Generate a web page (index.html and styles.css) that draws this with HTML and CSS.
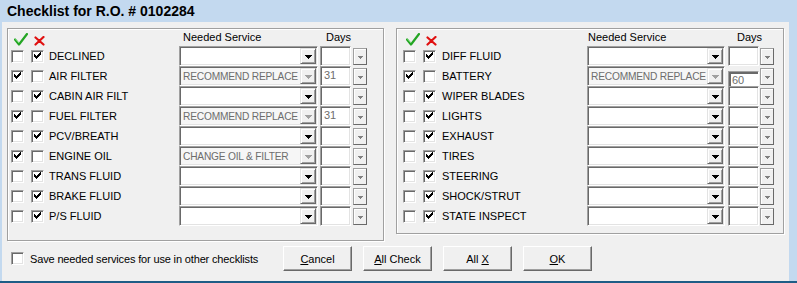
FILE: index.html
```html
<!DOCTYPE html>
<html>
<head>
<meta charset="utf-8">
<link rel="stylesheet" href="styles.css">
</head>
<body>
<div class="window">
  <div class="titlebar">Checklist for R.O. # 0102284</div>
  <div class="client">
    <div class="groups">
      <div class="group group-left">
        <div class="head">
          <span class="ico-ok"><svg width="14" height="13" viewBox="0 0 14 13"><path d="M1 6.5 L5 11.5 L13 1" fill="none" stroke="#23a523" stroke-width="2.2" stroke-linecap="round" stroke-linejoin="round"/><path d="M1.5 6 L5 10" fill="none" stroke="#7ee07e" stroke-width="1"/></svg></span>
          <span class="ico-x"><svg width="11" height="10" viewBox="0 0 11 10"><path d="M1.5 1.5 L9.5 8.5 M9.5 1 L1.5 8.5" fill="none" stroke="#e01010" stroke-width="2.2" stroke-linecap="round"/></svg></span>
          <span class="h-service">Needed Service</span>
          <span class="h-days">Days</span>
        </div>
        <div class="row">
          <span class="cb"></span><span class="cb"><svg class="chk" viewBox="0 0 9 9"><path d="M1 2h1v3h-1zM2 3h1v3h-1zM3 4h1v3h-1zM4 3h1v3h-1zM5 2h1v3h-1zM6 1h1v3h-1zM7 0h1v3h-1z"/></svg></span>
          <span class="lbl">DECLINED</span>
          <span class="combo"><span class="ctext"></span><span class="dd"><svg class="arr" viewBox="0 0 7 4"><path d="M0 0h7v1h-1v1h-1v1h-1v1h-1v-1h-1v-1h-1v-1h-1z"/></svg></span></span>
          <span class="days"></span><span class="dbtn"><svg class="sarr" viewBox="0 0 5 3"><path d="M0 0h5v1h-1v1h-1v1h-1v-1h-1v-1h-1z"/></svg></span>
        </div>
        <div class="row">
          <span class="cb"><svg class="chk" viewBox="0 0 9 9"><path d="M1 2h1v3h-1zM2 3h1v3h-1zM3 4h1v3h-1zM4 3h1v3h-1zM5 2h1v3h-1zM6 1h1v3h-1zM7 0h1v3h-1z"/></svg></span><span class="cb"></span>
          <span class="lbl">AIR FILTER</span>
          <span class="combo dis"><span class="ctext">RECOMMEND REPLACE</span><span class="dd"><svg class="arr" viewBox="0 0 7 4"><path d="M0 0h7v1h-1v1h-1v1h-1v1h-1v-1h-1v-1h-1v-1h-1z"/></svg></span></span>
          <span class="days">31</span><span class="dbtn"><svg class="sarr" viewBox="0 0 5 3"><path d="M0 0h5v1h-1v1h-1v1h-1v-1h-1v-1h-1z"/></svg></span>
        </div>
        <div class="row">
          <span class="cb"></span><span class="cb"><svg class="chk" viewBox="0 0 9 9"><path d="M1 2h1v3h-1zM2 3h1v3h-1zM3 4h1v3h-1zM4 3h1v3h-1zM5 2h1v3h-1zM6 1h1v3h-1zM7 0h1v3h-1z"/></svg></span>
          <span class="lbl">CABIN AIR FILT</span>
          <span class="combo"><span class="ctext"></span><span class="dd"><svg class="arr" viewBox="0 0 7 4"><path d="M0 0h7v1h-1v1h-1v1h-1v1h-1v-1h-1v-1h-1v-1h-1z"/></svg></span></span>
          <span class="days"></span><span class="dbtn"><svg class="sarr" viewBox="0 0 5 3"><path d="M0 0h5v1h-1v1h-1v1h-1v-1h-1v-1h-1z"/></svg></span>
        </div>
        <div class="row">
          <span class="cb"><svg class="chk" viewBox="0 0 9 9"><path d="M1 2h1v3h-1zM2 3h1v3h-1zM3 4h1v3h-1zM4 3h1v3h-1zM5 2h1v3h-1zM6 1h1v3h-1zM7 0h1v3h-1z"/></svg></span><span class="cb"></span>
          <span class="lbl">FUEL FILTER</span>
          <span class="combo dis"><span class="ctext">RECOMMEND REPLACE</span><span class="dd"><svg class="arr" viewBox="0 0 7 4"><path d="M0 0h7v1h-1v1h-1v1h-1v1h-1v-1h-1v-1h-1v-1h-1z"/></svg></span></span>
          <span class="days">31</span><span class="dbtn"><svg class="sarr" viewBox="0 0 5 3"><path d="M0 0h5v1h-1v1h-1v1h-1v-1h-1v-1h-1z"/></svg></span>
        </div>
        <div class="row">
          <span class="cb"></span><span class="cb"><svg class="chk" viewBox="0 0 9 9"><path d="M1 2h1v3h-1zM2 3h1v3h-1zM3 4h1v3h-1zM4 3h1v3h-1zM5 2h1v3h-1zM6 1h1v3h-1zM7 0h1v3h-1z"/></svg></span>
          <span class="lbl">PCV/BREATH</span>
          <span class="combo"><span class="ctext"></span><span class="dd"><svg class="arr" viewBox="0 0 7 4"><path d="M0 0h7v1h-1v1h-1v1h-1v1h-1v-1h-1v-1h-1v-1h-1z"/></svg></span></span>
          <span class="days"></span><span class="dbtn"><svg class="sarr" viewBox="0 0 5 3"><path d="M0 0h5v1h-1v1h-1v1h-1v-1h-1v-1h-1z"/></svg></span>
        </div>
        <div class="row">
          <span class="cb"><svg class="chk" viewBox="0 0 9 9"><path d="M1 2h1v3h-1zM2 3h1v3h-1zM3 4h1v3h-1zM4 3h1v3h-1zM5 2h1v3h-1zM6 1h1v3h-1zM7 0h1v3h-1z"/></svg></span><span class="cb"></span>
          <span class="lbl">ENGINE OIL</span>
          <span class="combo dis"><span class="ctext">CHANGE OIL &amp; FILTER</span><span class="dd"><svg class="arr" viewBox="0 0 7 4"><path d="M0 0h7v1h-1v1h-1v1h-1v1h-1v-1h-1v-1h-1v-1h-1z"/></svg></span></span>
          <span class="days"></span><span class="dbtn"><svg class="sarr" viewBox="0 0 5 3"><path d="M0 0h5v1h-1v1h-1v1h-1v-1h-1v-1h-1z"/></svg></span>
        </div>
        <div class="row">
          <span class="cb"></span><span class="cb"><svg class="chk" viewBox="0 0 9 9"><path d="M1 2h1v3h-1zM2 3h1v3h-1zM3 4h1v3h-1zM4 3h1v3h-1zM5 2h1v3h-1zM6 1h1v3h-1zM7 0h1v3h-1z"/></svg></span>
          <span class="lbl">TRANS FLUID</span>
          <span class="combo"><span class="ctext"></span><span class="dd"><svg class="arr" viewBox="0 0 7 4"><path d="M0 0h7v1h-1v1h-1v1h-1v1h-1v-1h-1v-1h-1v-1h-1z"/></svg></span></span>
          <span class="days"></span><span class="dbtn"><svg class="sarr" viewBox="0 0 5 3"><path d="M0 0h5v1h-1v1h-1v1h-1v-1h-1v-1h-1z"/></svg></span>
        </div>
        <div class="row">
          <span class="cb"></span><span class="cb"><svg class="chk" viewBox="0 0 9 9"><path d="M1 2h1v3h-1zM2 3h1v3h-1zM3 4h1v3h-1zM4 3h1v3h-1zM5 2h1v3h-1zM6 1h1v3h-1zM7 0h1v3h-1z"/></svg></span>
          <span class="lbl">BRAKE FLUID</span>
          <span class="combo"><span class="ctext"></span><span class="dd"><svg class="arr" viewBox="0 0 7 4"><path d="M0 0h7v1h-1v1h-1v1h-1v1h-1v-1h-1v-1h-1v-1h-1z"/></svg></span></span>
          <span class="days"></span><span class="dbtn"><svg class="sarr" viewBox="0 0 5 3"><path d="M0 0h5v1h-1v1h-1v1h-1v-1h-1v-1h-1z"/></svg></span>
        </div>
        <div class="row">
          <span class="cb"></span><span class="cb"><svg class="chk" viewBox="0 0 9 9"><path d="M1 2h1v3h-1zM2 3h1v3h-1zM3 4h1v3h-1zM4 3h1v3h-1zM5 2h1v3h-1zM6 1h1v3h-1zM7 0h1v3h-1z"/></svg></span>
          <span class="lbl">P/S FLUID</span>
          <span class="combo"><span class="ctext"></span><span class="dd"><svg class="arr" viewBox="0 0 7 4"><path d="M0 0h7v1h-1v1h-1v1h-1v1h-1v-1h-1v-1h-1v-1h-1z"/></svg></span></span>
          <span class="days"></span><span class="dbtn"><svg class="sarr" viewBox="0 0 5 3"><path d="M0 0h5v1h-1v1h-1v1h-1v-1h-1v-1h-1z"/></svg></span>
        </div>
      </div>

      <div class="group group-right">
        <div class="head">
          <span class="ico-ok"><svg width="14" height="13" viewBox="0 0 14 13"><path d="M1 6.5 L5 11.5 L13 1" fill="none" stroke="#23a523" stroke-width="2.2" stroke-linecap="round" stroke-linejoin="round"/><path d="M1.5 6 L5 10" fill="none" stroke="#7ee07e" stroke-width="1"/></svg></span>
          <span class="ico-x"><svg width="11" height="10" viewBox="0 0 11 10"><path d="M1.5 1.5 L9.5 8.5 M9.5 1 L1.5 8.5" fill="none" stroke="#e01010" stroke-width="2.2" stroke-linecap="round"/></svg></span>
          <span class="h-service">Needed Service</span>
          <span class="h-days">Days</span>
        </div>
        <div class="row">
          <span class="cb"></span><span class="cb"><svg class="chk" viewBox="0 0 9 9"><path d="M1 2h1v3h-1zM2 3h1v3h-1zM3 4h1v3h-1zM4 3h1v3h-1zM5 2h1v3h-1zM6 1h1v3h-1zM7 0h1v3h-1z"/></svg></span>
          <span class="lbl">DIFF FLUID</span>
          <span class="combo"><span class="ctext"></span><span class="dd"><svg class="arr" viewBox="0 0 7 4"><path d="M0 0h7v1h-1v1h-1v1h-1v1h-1v-1h-1v-1h-1v-1h-1z"/></svg></span></span>
          <span class="days"></span><span class="dbtn"><svg class="sarr" viewBox="0 0 5 3"><path d="M0 0h5v1h-1v1h-1v1h-1v-1h-1v-1h-1z"/></svg></span>
        </div>
        <div class="row">
          <span class="cb"><svg class="chk" viewBox="0 0 9 9"><path d="M1 2h1v3h-1zM2 3h1v3h-1zM3 4h1v3h-1zM4 3h1v3h-1zM5 2h1v3h-1zM6 1h1v3h-1zM7 0h1v3h-1z"/></svg></span><span class="cb"></span>
          <span class="lbl">BATTERY</span>
          <span class="combo dis"><span class="ctext">RECOMMEND REPLACE</span><span class="dd"><svg class="arr" viewBox="0 0 7 4"><path d="M0 0h7v1h-1v1h-1v1h-1v1h-1v-1h-1v-1h-1v-1h-1z"/></svg></span></span>
          <span class="days days-low">60</span><span class="dbtn"><svg class="sarr" viewBox="0 0 5 3"><path d="M0 0h5v1h-1v1h-1v1h-1v-1h-1v-1h-1z"/></svg></span>
        </div>
        <div class="row">
          <span class="cb"></span><span class="cb"><svg class="chk" viewBox="0 0 9 9"><path d="M1 2h1v3h-1zM2 3h1v3h-1zM3 4h1v3h-1zM4 3h1v3h-1zM5 2h1v3h-1zM6 1h1v3h-1zM7 0h1v3h-1z"/></svg></span>
          <span class="lbl">WIPER BLADES</span>
          <span class="combo"><span class="ctext"></span><span class="dd"><svg class="arr" viewBox="0 0 7 4"><path d="M0 0h7v1h-1v1h-1v1h-1v1h-1v-1h-1v-1h-1v-1h-1z"/></svg></span></span>
          <span class="days"></span><span class="dbtn"><svg class="sarr" viewBox="0 0 5 3"><path d="M0 0h5v1h-1v1h-1v1h-1v-1h-1v-1h-1z"/></svg></span>
        </div>
        <div class="row">
          <span class="cb"></span><span class="cb"><svg class="chk" viewBox="0 0 9 9"><path d="M1 2h1v3h-1zM2 3h1v3h-1zM3 4h1v3h-1zM4 3h1v3h-1zM5 2h1v3h-1zM6 1h1v3h-1zM7 0h1v3h-1z"/></svg></span>
          <span class="lbl">LIGHTS</span>
          <span class="combo"><span class="ctext"></span><span class="dd"><svg class="arr" viewBox="0 0 7 4"><path d="M0 0h7v1h-1v1h-1v1h-1v1h-1v-1h-1v-1h-1v-1h-1z"/></svg></span></span>
          <span class="days"></span><span class="dbtn"><svg class="sarr" viewBox="0 0 5 3"><path d="M0 0h5v1h-1v1h-1v1h-1v-1h-1v-1h-1z"/></svg></span>
        </div>
        <div class="row">
          <span class="cb"></span><span class="cb"><svg class="chk" viewBox="0 0 9 9"><path d="M1 2h1v3h-1zM2 3h1v3h-1zM3 4h1v3h-1zM4 3h1v3h-1zM5 2h1v3h-1zM6 1h1v3h-1zM7 0h1v3h-1z"/></svg></span>
          <span class="lbl">EXHAUST</span>
          <span class="combo"><span class="ctext"></span><span class="dd"><svg class="arr" viewBox="0 0 7 4"><path d="M0 0h7v1h-1v1h-1v1h-1v1h-1v-1h-1v-1h-1v-1h-1z"/></svg></span></span>
          <span class="days"></span><span class="dbtn"><svg class="sarr" viewBox="0 0 5 3"><path d="M0 0h5v1h-1v1h-1v1h-1v-1h-1v-1h-1z"/></svg></span>
        </div>
        <div class="row">
          <span class="cb"></span><span class="cb"><svg class="chk" viewBox="0 0 9 9"><path d="M1 2h1v3h-1zM2 3h1v3h-1zM3 4h1v3h-1zM4 3h1v3h-1zM5 2h1v3h-1zM6 1h1v3h-1zM7 0h1v3h-1z"/></svg></span>
          <span class="lbl">TIRES</span>
          <span class="combo"><span class="ctext"></span><span class="dd"><svg class="arr" viewBox="0 0 7 4"><path d="M0 0h7v1h-1v1h-1v1h-1v1h-1v-1h-1v-1h-1v-1h-1z"/></svg></span></span>
          <span class="days"></span><span class="dbtn"><svg class="sarr" viewBox="0 0 5 3"><path d="M0 0h5v1h-1v1h-1v1h-1v-1h-1v-1h-1z"/></svg></span>
        </div>
        <div class="row">
          <span class="cb"></span><span class="cb"><svg class="chk" viewBox="0 0 9 9"><path d="M1 2h1v3h-1zM2 3h1v3h-1zM3 4h1v3h-1zM4 3h1v3h-1zM5 2h1v3h-1zM6 1h1v3h-1zM7 0h1v3h-1z"/></svg></span>
          <span class="lbl">STEERING</span>
          <span class="combo"><span class="ctext"></span><span class="dd"><svg class="arr" viewBox="0 0 7 4"><path d="M0 0h7v1h-1v1h-1v1h-1v1h-1v-1h-1v-1h-1v-1h-1z"/></svg></span></span>
          <span class="days"></span><span class="dbtn"><svg class="sarr" viewBox="0 0 5 3"><path d="M0 0h5v1h-1v1h-1v1h-1v-1h-1v-1h-1z"/></svg></span>
        </div>
        <div class="row">
          <span class="cb"></span><span class="cb"><svg class="chk" viewBox="0 0 9 9"><path d="M1 2h1v3h-1zM2 3h1v3h-1zM3 4h1v3h-1zM4 3h1v3h-1zM5 2h1v3h-1zM6 1h1v3h-1zM7 0h1v3h-1z"/></svg></span>
          <span class="lbl">SHOCK/STRUT</span>
          <span class="combo"><span class="ctext"></span><span class="dd"><svg class="arr" viewBox="0 0 7 4"><path d="M0 0h7v1h-1v1h-1v1h-1v1h-1v-1h-1v-1h-1v-1h-1z"/></svg></span></span>
          <span class="days"></span><span class="dbtn"><svg class="sarr" viewBox="0 0 5 3"><path d="M0 0h5v1h-1v1h-1v1h-1v-1h-1v-1h-1z"/></svg></span>
        </div>
        <div class="row">
          <span class="cb"></span><span class="cb"><svg class="chk" viewBox="0 0 9 9"><path d="M1 2h1v3h-1zM2 3h1v3h-1zM3 4h1v3h-1zM4 3h1v3h-1zM5 2h1v3h-1zM6 1h1v3h-1zM7 0h1v3h-1z"/></svg></span>
          <span class="lbl">STATE INSPECT</span>
          <span class="combo"><span class="ctext"></span><span class="dd"><svg class="arr" viewBox="0 0 7 4"><path d="M0 0h7v1h-1v1h-1v1h-1v1h-1v-1h-1v-1h-1v-1h-1z"/></svg></span></span>
          <span class="days"></span><span class="dbtn"><svg class="sarr" viewBox="0 0 5 3"><path d="M0 0h5v1h-1v1h-1v1h-1v-1h-1v-1h-1z"/></svg></span>
        </div>
      </div>
    </div>

    <div class="footer">
      <span class="cb"></span>
      <span class="save-lbl">Save needed services for use in other checklists</span>
      <div class="buttons">
        <span class="btn"><u>C</u>ancel</span>
        <span class="btn"><u>A</u>ll Check</span>
        <span class="btn">All <u>X</u></span>
        <span class="btn"><u>O</u>K</span>
      </div>
    </div>
  </div>
</div>
</body>
</html>
```

FILE: styles.css
```css
html, body {
  margin: 0;
  padding: 0;
  background: #f0f0f0;
}

body {
  font-family: "Liberation Sans", Arial, sans-serif;
  font-size: 11px;
  color: #000;
}

.window {
  width: 797px;
  height: 283px;
  box-sizing: border-box;
  background: #c3d9ef;
  display: flex;
  flex-direction: column;
  border-bottom: 2px solid #1e5d86;
  overflow: hidden;
}

.titlebar {
  height: 22px;
  line-height: 22px;
  padding-left: 7px;
  font-weight: bold;
  font-size: 14px;
  color: #000;
  flex: none;
}

.client {
  flex: 1;
  background: #f0f0f0;
  margin: 0 8px 0 2px;
  display: flex;
  flex-direction: column;
}

.groups {
  display: flex;
  align-items: flex-start;
  margin-top: 6px;
  height: 213px;
}

.group {
  box-sizing: border-box;
  border: 1px solid #a0a0a0;
  box-shadow: inset 1px 1px #fff, 1px 1px #fff;
  display: flex;
  flex-direction: column;
}

.group-left {
  margin-left: 5px;
  width: 377px;
  height: 213px;
  padding-left: 3px;
}

.group-right {
  margin-left: 12px;
  width: 388px;
  height: 206px;
  padding-left: 6px;
}

.head {
  height: 17px;
  display: flex;
  align-items: flex-start;
  flex: none;
}

.ico-ok {
  width: 14px;
  height: 13px;
  margin-top: 4px;
  margin-left: 3px;
}

.ico-x {
  width: 11px;
  height: 10px;
  margin-top: 7px;
  margin-left: 6px;
}

.ico-ok svg, .ico-x svg {
  display: block;
}

.h-service, .h-days {
  margin-top: 2px;
  line-height: 13px;
  white-space: nowrap;
}

.group-left .h-service {
  margin-left: 138px;
  width: 143px;
}

.group-right .h-service {
  margin-left: 151px;
  width: 149px;
}

.row {
  height: 20px;
  display: flex;
  align-items: center;
  flex: none;
}

.cb {
  width: 13px;
  height: 13px;
  box-sizing: border-box;
  background: #fff;
  border: 1px solid;
  border-color: #a0a0a0 #fff #fff #a0a0a0;
  box-shadow: inset 1px 1px #696969, inset -1px -1px #e3e3e3;
  flex: none;
  padding: 1px;
}

.cb + .cb {
  margin-left: 7px;
}

.chk {
  display: block;
  width: 9px;
  height: 9px;
  fill: #000;
  shape-rendering: crispEdges;
}

.lbl {
  flex: none;
  white-space: nowrap;
}

.group-left .lbl {
  margin-left: 5px;
  width: 130px;
}

.group-right .lbl {
  margin-left: 6px;
  width: 145px;
}

.combo {
  flex: none;
  height: 20px;
  box-sizing: border-box;
  border: 1px solid;
  border-color: #a0a0a0 #fff #fff #a0a0a0;
  box-shadow: inset 1px 1px #696969, inset -1px -1px #e3e3e3;
  background: #fff;
  display: flex;
  align-items: center;
  padding: 1px 1px 1px 2px;
}

.group-left .combo {
  width: 139px;
}

.group-right .combo {
  width: 138px;
}

.ctext {
  flex: 1;
  min-width: 0;
  overflow: hidden;
  white-space: nowrap;
  padding-left: 1px;
  font-size: 10.2px;
  letter-spacing: -0.2px;
}

.combo.dis {
  background: #f6f6f6;
}

.combo.dis .ctext {
  color: #6d6d6d;
}

.dd {
  flex: none;
  width: 16px;
  height: 16px;
  box-sizing: border-box;
  background: #f0f0f0;
  border: 1px solid;
  border-color: #e3e3e3 #696969 #696969 #e3e3e3;
  box-shadow: inset 1px 1px #fff, inset -1px -1px #a0a0a0;
  display: flex;
  align-items: center;
  justify-content: center;
}

.arr {
  width: 7px;
  height: 4px;
  fill: #000;
  shape-rendering: crispEdges;
  display: block;
  margin-top: 1px;
}

.combo.dis .arr {
  fill: #a0a0a0;
}

.days {
  flex: none;
  width: 31px;
  height: 20px;
  box-sizing: border-box;
  border: 1px solid;
  border-color: #a0a0a0 #fff #fff #a0a0a0;
  box-shadow: inset 1px 1px #696969, inset -1px -1px #e3e3e3;
  background: #fff;
  color: #6d6d6d;
  padding-left: 3px;
  line-height: 17px;
}

.group-left .days {
  margin-left: 2px;
}

.group-right .days {
  margin-left: 3px;
}

.days-low {
  margin-top: 6px;
  height: 17px;
  line-height: 17px;
  box-shadow: inset 2px 2px #696969;
}

.dbtn {
  flex: none;
  width: 14px;
  height: 17px;
  box-sizing: border-box;
  margin-left: 2px;
  background: #f0f0f0;
  border: 1px solid;
  border-color: #a0a0a0 #696969 #696969 #a0a0a0;
  box-shadow: inset 1px 1px #fff;
  display: flex;
  align-items: center;
  justify-content: center;
}

.group-right .dbtn {
  margin-left: 1px;
}

.sarr {
  width: 5px;
  height: 3px;
  fill: #808080;
  shape-rendering: crispEdges;
  display: block;
  margin-top: 2px;
}

.footer {
  display: flex;
  align-items: center;
  margin-top: 5px;
  height: 25px;
  padding-left: 9px;
}

.save-lbl {
  margin-left: 6px;
  width: 253px;
  white-space: nowrap;
  letter-spacing: -0.15px;
}

.buttons {
  display: flex;
  gap: 11px;
}

.btn {
  width: 69px;
  height: 25px;
  box-sizing: border-box;
  border: 1px solid;
  border-color: #fff #696969 #696969 #fff;
  box-shadow: inset -1px -1px #a0a0a0;
  background: #f0f0f0;
  display: flex;
  align-items: center;
  justify-content: center;
  white-space: pre;
}

.btn u {
  text-decoration: underline;
  text-underline-offset: 1px;
}
```
